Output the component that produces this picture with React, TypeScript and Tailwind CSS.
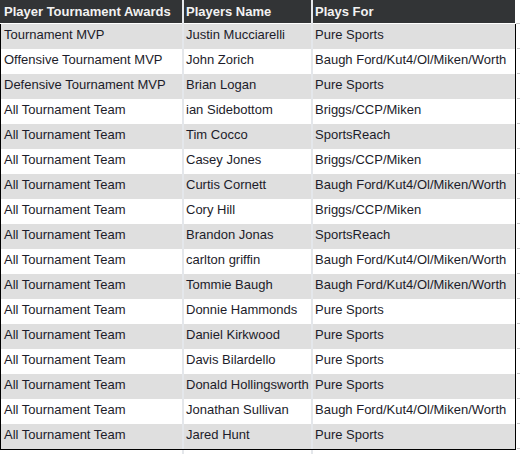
import React from "react";

const rows: [string, string, string][] = [
  ["Tournament MVP", "Justin Mucciarelli", "Pure Sports"],
  ["Offensive Tournament MVP", "John Zorich", "Baugh Ford/Kut4/Ol/Miken/Worth"],
  ["Defensive Tournament MVP", "Brian Logan", "Pure Sports"],
  ["All Tournament Team", "ian Sidebottom", "Briggs/CCP/Miken"],
  ["All Tournament Team", "Tim Cocco", "SportsReach"],
  ["All Tournament Team", "Casey Jones", "Briggs/CCP/Miken"],
  ["All Tournament Team", "Curtis Cornett", "Baugh Ford/Kut4/Ol/Miken/Worth"],
  ["All Tournament Team", "Cory Hill", "Briggs/CCP/Miken"],
  ["All Tournament Team", "Brandon Jonas", "SportsReach"],
  ["All Tournament Team", "carlton griffin", "Baugh Ford/Kut4/Ol/Miken/Worth"],
  ["All Tournament Team", "Tommie Baugh", "Baugh Ford/Kut4/Ol/Miken/Worth"],
  ["All Tournament Team", "Donnie Hammonds", "Pure Sports"],
  ["All Tournament Team", "Daniel Kirkwood", "Pure Sports"],
  ["All Tournament Team", "Davis Bilardello", "Pure Sports"],
  ["All Tournament Team", "Donald Hollingsworth", "Pure Sports"],
  ["All Tournament Team", "Jonathan Sullivan", "Baugh Ford/Kut4/Ol/Miken/Worth"],
  ["All Tournament Team", "Jared Hunt", "Pure Sports"],
];

export default function App() {
  return (
    <div
      className="w-[520px] h-[454px] bg-white overflow-hidden text-[13px] leading-[16px]"
      style={{ fontFamily: '"Liberation Sans", Arial, sans-serif' }}
    >
      {/* header */}
      <div className="flex h-[24px] w-[520px]">
        <div className="w-[182px] shrink-0 h-[23px] bg-[#323436] text-[#f2f2f2] font-bold pl-[4px] pt-[4px] whitespace-nowrap">
          Player Tournament Awards
        </div>
        <div className="w-[2px] shrink-0 bg-[#e4e7eb]" />
        <div className="w-[127px] shrink-0 h-[23px] bg-[#323436] text-[#f2f2f2] font-bold pl-[2px] pt-[4px] whitespace-nowrap">
          Players Name
        </div>
        <div className="w-[2px] shrink-0 bg-[#e4e7eb]" />
        <div className="w-[202px] shrink-0 h-[23px] bg-[#323436] text-[#f2f2f2] font-bold pl-[2px] pt-[4px] whitespace-nowrap">
          Plays For
        </div>
        <div className="flex-1 flex flex-col justify-end">
          <div className="h-px ml-[1px] bg-[#c8c8c8]" />
        </div>
      </div>
      {/* body */}
      <div className="flex w-[520px]">
        <div className="w-[516px] shrink-0 border-l border-r border-b border-black">
          {rows.map((r, i) => {
            const bg = i % 2 === 0 ? "bg-[#dfdfdf]" : "bg-white";
            return (
              <div key={i} className={`flex h-[25px] ${bg} text-[#1c1c2a]`}>
                <div className="w-[181px] shrink-0 pl-[3px] pt-[3px] whitespace-nowrap">{r[0]}</div>
                <div className="w-[2px] shrink-0 bg-[#e4e7eb]" />
                <div className="w-[127px] shrink-0 pl-[2px] pt-[3px] whitespace-nowrap">{r[1]}</div>
                <div className="w-[2px] shrink-0 bg-[#e4e7eb]" />
                <div className="flex-1 pl-[2px] pt-[3px] whitespace-nowrap">{r[2]}</div>
              </div>
            );
          })}
        </div>
        <div className="flex-1 flex flex-col">
          {rows.map((_, i) => (
            <div key={i} className="h-[25px] flex flex-col justify-end">
              <div className="h-px ml-[1px] bg-[#c8c8c8]" />
            </div>
          ))}
        </div>
      </div>
      <div className="flex h-[4px]">
        <div className="w-[182px] shrink-0" />
        <div className="w-[2px] shrink-0 bg-[#e4e7eb]" />
        <div className="w-[127px] shrink-0" />
        <div className="w-[2px] shrink-0 bg-[#e4e7eb]" />
      </div>
    </div>
  );
}
